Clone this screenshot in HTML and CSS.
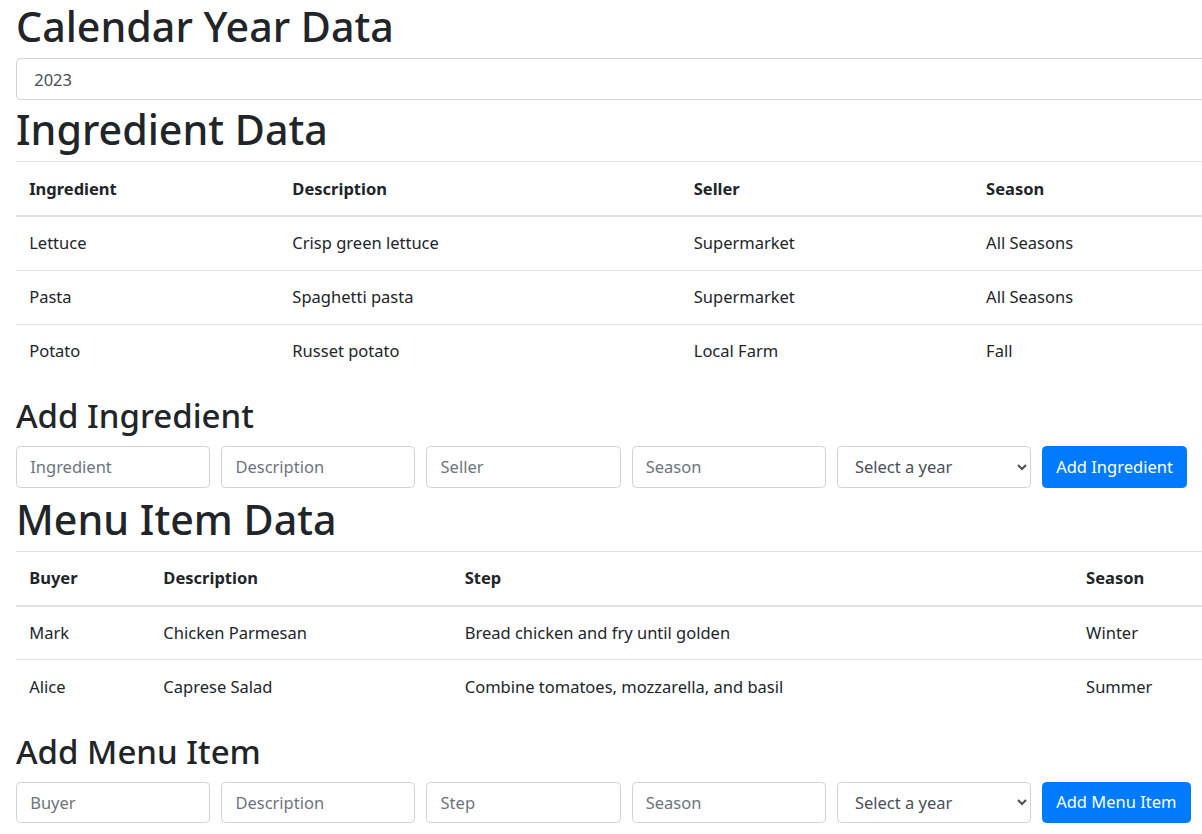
FILE: index.html
```html
<!DOCTYPE html>
<html lang="en">
<head>
<meta charset="utf-8">
<title>Calendar Year Data</title>
<link rel="stylesheet" href="styles.css">
</head>
<body>
<div class="container">
  <h1>Calendar Year Data</h1>
  <select class="form-control year-select">
    <option>2023</option>
  </select>

  <h1>Ingredient Data</h1>
  <table class="table ingredients">
    <thead>
      <tr><th class="c1">Ingredient</th><th class="c2">Description</th><th class="c3">Seller</th><th>Season</th></tr>
    </thead>
    <tbody>
      <tr><td>Lettuce</td><td>Crisp green lettuce</td><td>Supermarket</td><td>All Seasons</td></tr>
      <tr><td>Pasta</td><td>Spaghetti pasta</td><td>Supermarket</td><td>All Seasons</td></tr>
      <tr><td>Potato</td><td>Russet potato</td><td>Local Farm</td><td>Fall</td></tr>
    </tbody>
  </table>

  <h2>Add Ingredient</h2>
  <form class="add-form">
    <input class="form-control" type="text" placeholder="Ingredient">
    <input class="form-control" type="text" placeholder="Description">
    <input class="form-control" type="text" placeholder="Seller">
    <input class="form-control" type="text" placeholder="Season">
    <select class="form-control"><option>Select a year</option></select>
    <button class="btn" type="button">Add Ingredient</button>
  </form>

  <h1>Menu Item Data</h1>
  <table class="table menu">
    <thead>
      <tr><th class="c1">Buyer</th><th class="c2">Description</th><th class="c3">Step</th><th>Season</th></tr>
    </thead>
    <tbody>
      <tr><td>Mark</td><td>Chicken Parmesan</td><td>Bread chicken and fry until golden</td><td>Winter</td></tr>
      <tr><td>Alice</td><td>Caprese Salad</td><td>Combine tomatoes, mozzarella, and basil</td><td>Summer</td></tr>
    </tbody>
  </table>

  <h2>Add Menu Item</h2>
  <form class="add-form">
    <input class="form-control" type="text" placeholder="Buyer">
    <input class="form-control" type="text" placeholder="Description">
    <input class="form-control" type="text" placeholder="Step">
    <input class="form-control" type="text" placeholder="Season">
    <select class="form-control"><option>Select a year</option></select>
    <button class="btn" type="button">Add Menu Item</button>
  </form>
</div>
</body>
</html>
```

FILE: styles.css
```css
html {
  overflow: hidden;
}
body {
  margin: 0;
  font-family: "Noto Sans", "Open Sans", sans-serif;
  font-size: 16.5px;
  line-height: 26.4px;
  color: #212529;
  background: #fff;
}
.container {
  width: 1240px;
  padding-left: 16px;
}
h1, h2 {
  margin: 0 0 5.5px;
  font-weight: 500;
}
h1 {
  font-size: 41.2px;
  line-height: 52.8px;
}
h2 {
  font-size: 33px;
  line-height: 42.2px;
}
.form-control {
  box-sizing: border-box;
  height: 41.8px;
  padding: 6.6px 13.2px;
  font-family: inherit;
  font-size: 16.5px;
  line-height: 26.4px;
  color: #495057;
  background: #fff;
  border: 1px solid #ced4da;
  border-radius: 4.4px;
}
.form-control::placeholder {
  color: #6c757d;
}
.year-select {
  display: block;
  width: 100%;
  margin-top: 1px;
  margin-bottom: 3px;
}
.table {
  width: 100%;
  border-collapse: collapse;
  table-layout: fixed;
  margin-bottom: 17.6px;
}
.table th, .table td {
  padding: 13.2px;
  text-align: left;
  vertical-align: top;
  border-top: 1px solid #dee2e6;
}
.table th {
  font-weight: 700;
  border-bottom: 2px solid #dee2e6;
}
.ingredients .c1 { width: 236.8px; }
.ingredients .c2 { width: 375px; }
.ingredients .c3 { width: 266px; }
.menu .c1 { width: 107.8px; }
.menu .c2 { width: 275px; }
.menu .c3 { width: 595px; }
.add-form {
  display: flex;
  gap: 11px;
  padding-top: 3px;
  margin-bottom: 5px;
}
.add-form .form-control {
  width: 194.2px;
}
.btn {
  box-sizing: border-box;
  height: 41.8px;
  padding: 6.6px 13.2px;
  font-family: inherit;
  font-size: 16.5px;
  line-height: 26.4px;
  color: #fff;
  background: #007bff;
  border: 1px solid #007bff;
  border-radius: 4.4px;
}
```
